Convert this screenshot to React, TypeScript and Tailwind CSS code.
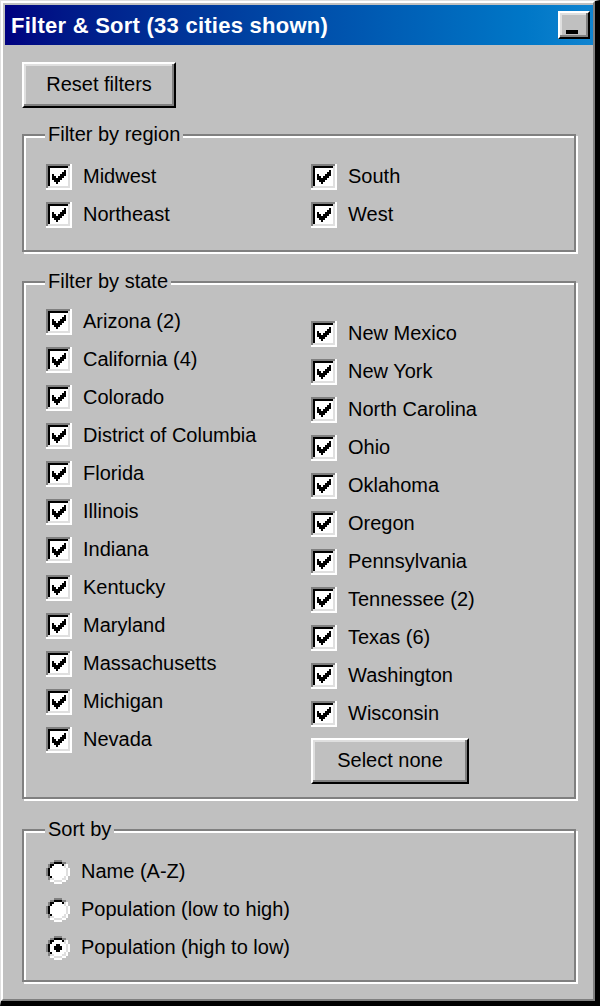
import React from 'react'

const leftStates = [
  'Arizona (2)',
  'California (4)',
  'Colorado',
  'District of Columbia',
  'Florida',
  'Illinois',
  'Indiana',
  'Kentucky',
  'Maryland',
  'Massachusetts',
  'Michigan',
  'Nevada',
]

const rightStates = [
  'New Mexico',
  'New York',
  'North Carolina',
  'Ohio',
  'Oklahoma',
  'Oregon',
  'Pennsylvania',
  'Tennessee (2)',
  'Texas (6)',
  'Washington',
  'Wisconsin',
]

// pixel rows of the classic 7x7 check glyph, placed at (3,3) in a 13px box
const checkRows: [number, number][][] = [
  [[6, 6]],
  [[5, 6]],
  [[0, 0], [4, 6]],
  [[0, 1], [3, 5]],
  [[0, 4]],
  [[1, 3]],
  [[2, 2]],
]

const CheckBox: React.FC = () => (
  <svg width={26} height={26} viewBox="0 0 13 13" shapeRendering="crispEdges" className="shrink-0">
    <rect x={0} y={0} width={13} height={13} fill="#fff" />
    <rect x={0} y={0} width={12} height={1} fill="#808080" />
    <rect x={0} y={0} width={1} height={12} fill="#808080" />
    <rect x={1} y={1} width={10} height={1} fill="#000" />
    <rect x={1} y={1} width={1} height={10} fill="#000" />
    <rect x={1} y={11} width={11} height={1} fill="#dfdfdf" />
    <rect x={11} y={1} width={1} height={11} fill="#dfdfdf" />
    {checkRows.map((segs, r) =>
      segs.map(([a, b], i) => (
        <rect key={`${r}-${i}`} x={3 + a} y={3 + r} width={b - a + 1} height={1} fill="#000" />
      )),
    )}
  </svg>
)

const outerRing: [number, number[]][] = [
  [0, [4, 5, 6, 7]],
  [1, [2, 3, 8, 9]],
  [2, [1, 10]],
  [3, [1, 10]],
  [4, [0, 11]],
  [5, [0, 11]],
  [6, [0, 11]],
  [7, [0, 11]],
  [8, [1, 10]],
  [9, [1, 10]],
  [10, [2, 3, 8, 9]],
  [11, [4, 5, 6, 7]],
]

const innerRing: [number, number[]][] = [
  [1, [4, 5, 6, 7]],
  [2, [2, 3, 8, 9]],
  [3, [2, 9]],
  [4, [1, 10]],
  [5, [1, 10]],
  [6, [1, 10]],
  [7, [1, 10]],
  [8, [2, 9]],
  [9, [2, 3, 8, 9]],
  [10, [4, 5, 6, 7]],
]

const inside: [number, number, number][] = [
  [2, 4, 4],
  [3, 3, 6],
  [4, 2, 8],
  [5, 2, 8],
  [6, 2, 8],
  [7, 2, 8],
  [8, 3, 6],
  [9, 4, 4],
]

const Radio: React.FC<{ checked?: boolean }> = ({ checked }) => (
  <svg width={24} height={24} viewBox="0 0 12 12" shapeRendering="crispEdges" className="shrink-0">
    {inside.map(([y, x, w]) => (
      <rect key={`i${y}`} x={x} y={y} width={w} height={1} fill="#fff" />
    ))}
    {outerRing.map(([y, xs]) =>
      xs.map((x) => (
        <rect key={`o${y}-${x}`} x={x} y={y} width={1} height={1} fill={x + y <= 10 ? '#808080' : '#fff'} />
      )),
    )}
    {innerRing.map(([y, xs]) =>
      xs.map((x) => (
        <rect key={`n${y}-${x}`} x={x} y={y} width={1} height={1} fill={x + y <= 10 ? '#000' : '#dfdfdf'} />
      )),
    )}
    {checked && (
      <g fill="#000">
        <rect x={5} y={4} width={2} height={1} />
        <rect x={4} y={5} width={4} height={2} />
        <rect x={5} y={7} width={2} height={1} />
      </g>
    )}
  </svg>
)

const CheckRow: React.FC<{ label: string }> = ({ label }) => (
  <div className="flex h-[26px] items-center gap-[11px]">
    <CheckBox />
    <span className="pb-[2px] whitespace-nowrap leading-[26px]">{label}</span>
  </div>
)

const RadioRow: React.FC<{ label: string; checked?: boolean }> = ({ label, checked }) => (
  <div className="flex h-[26px] items-center gap-[11px]">
    <Radio checked={checked} />
    <span className="pb-[3px] whitespace-nowrap leading-[26px]">{label}</span>
  </div>
)

const RaisedButton: React.FC<{ label: string; className?: string }> = ({ label, className }) => (
  <button
    className={`flex h-[46px] items-center justify-center border-2 border-t-white border-l-white border-r-black border-b-black bg-[#c0c0c0] pb-[2px] text-[20px] text-black shadow-[inset_-2px_-2px_0_#808080,inset_2px_2px_0_#dfdfdf] ${className ?? ''}`}
  >
    {label}
  </button>
)

const GroupBox: React.FC<{ title: string; className?: string; children: React.ReactNode }> = ({
  title,
  className,
  children,
}) => (
  <div
    className={`relative border-2 border-[#808080] pl-[22px] shadow-[inset_2px_2px_0_#fff,2px_2px_0_#fff] ${className ?? ''}`}
  >
    <span className="absolute top-[-14px] left-[21px] bg-[#c0c0c0] px-[3px] leading-[24px] whitespace-nowrap">
      {title}
    </span>
    {children}
  </div>
)

export default function App() {
  return (
    <div className="h-[1006px] w-[600px] border-t border-l border-t-[#dfdfdf] border-l-[#dfdfdf] border-r-[5px] border-b-[5px] border-r-black border-b-black bg-[#c0c0c0] font-['Liberation_Sans',Arial,sans-serif] text-[20px] text-black">
      <div className="flex h-full flex-col border-t-2 border-l-2 border-t-white border-l-white border-r-2 border-b-2 border-r-[#808080] border-b-[#808080] pt-[2px] pl-[2px]">
        <div className="flex h-[40px] shrink-0 items-center justify-between bg-linear-to-r from-[#000080] to-[#1084d0] pr-[3px] pl-[6px]">
          <span className="text-[22px] font-bold tracking-[0.25px] whitespace-nowrap text-white">
            Filter &amp; Sort (33 cities shown)
          </span>
          <button className="flex h-[28px] w-[32px] items-end border-2 border-t-white border-l-white border-r-black border-b-black bg-[#c0c0c0] pb-[3px] pl-[6px] shadow-[inset_-2px_-2px_0_#808080,inset_2px_2px_0_#dfdfdf]">
            <span className="block h-[4px] w-[12px] bg-black" />
          </button>
        </div>

        <div className="flex flex-col px-[17px] pt-[17px]">
          <RaisedButton label="Reset filters" className="w-[154px]" />

          <GroupBox title="Filter by region" className="mt-[26px] pt-[28px] pb-[22px]">
            <div className="grid grid-cols-[265px_1fr] gap-y-[12px]">
              <CheckRow label="Midwest" />
              <CheckRow label="South" />
              <CheckRow label="Northeast" />
              <CheckRow label="West" />
            </div>
          </GroupBox>

          <GroupBox title="Filter by state" className="mt-[29px] pt-[26px] pb-[13px]">
            <div className="flex">
              <div className="flex w-[265px] flex-col gap-[12px]">
                {leftStates.map((s) => (
                  <CheckRow key={s} label={s} />
                ))}
              </div>
              <div className="mt-[12px] flex flex-col">
                <div className="flex flex-col gap-[12px]">
                  {rightStates.map((s) => (
                    <CheckRow key={s} label={s} />
                  ))}
                </div>
                <RaisedButton label="Select none" className="mt-[11px] w-[158px]" />
              </div>
            </div>
          </GroupBox>

          <GroupBox title="Sort by" className="mt-[30px] pt-[28px] pb-[19px]">
            <div className="flex flex-col gap-[12px]">
              <RadioRow label="Name (A-Z)" />
              <RadioRow label="Population (low to high)" />
              <RadioRow label="Population (high to low)" checked />
            </div>
          </GroupBox>
        </div>
      </div>
    </div>
  )
}
